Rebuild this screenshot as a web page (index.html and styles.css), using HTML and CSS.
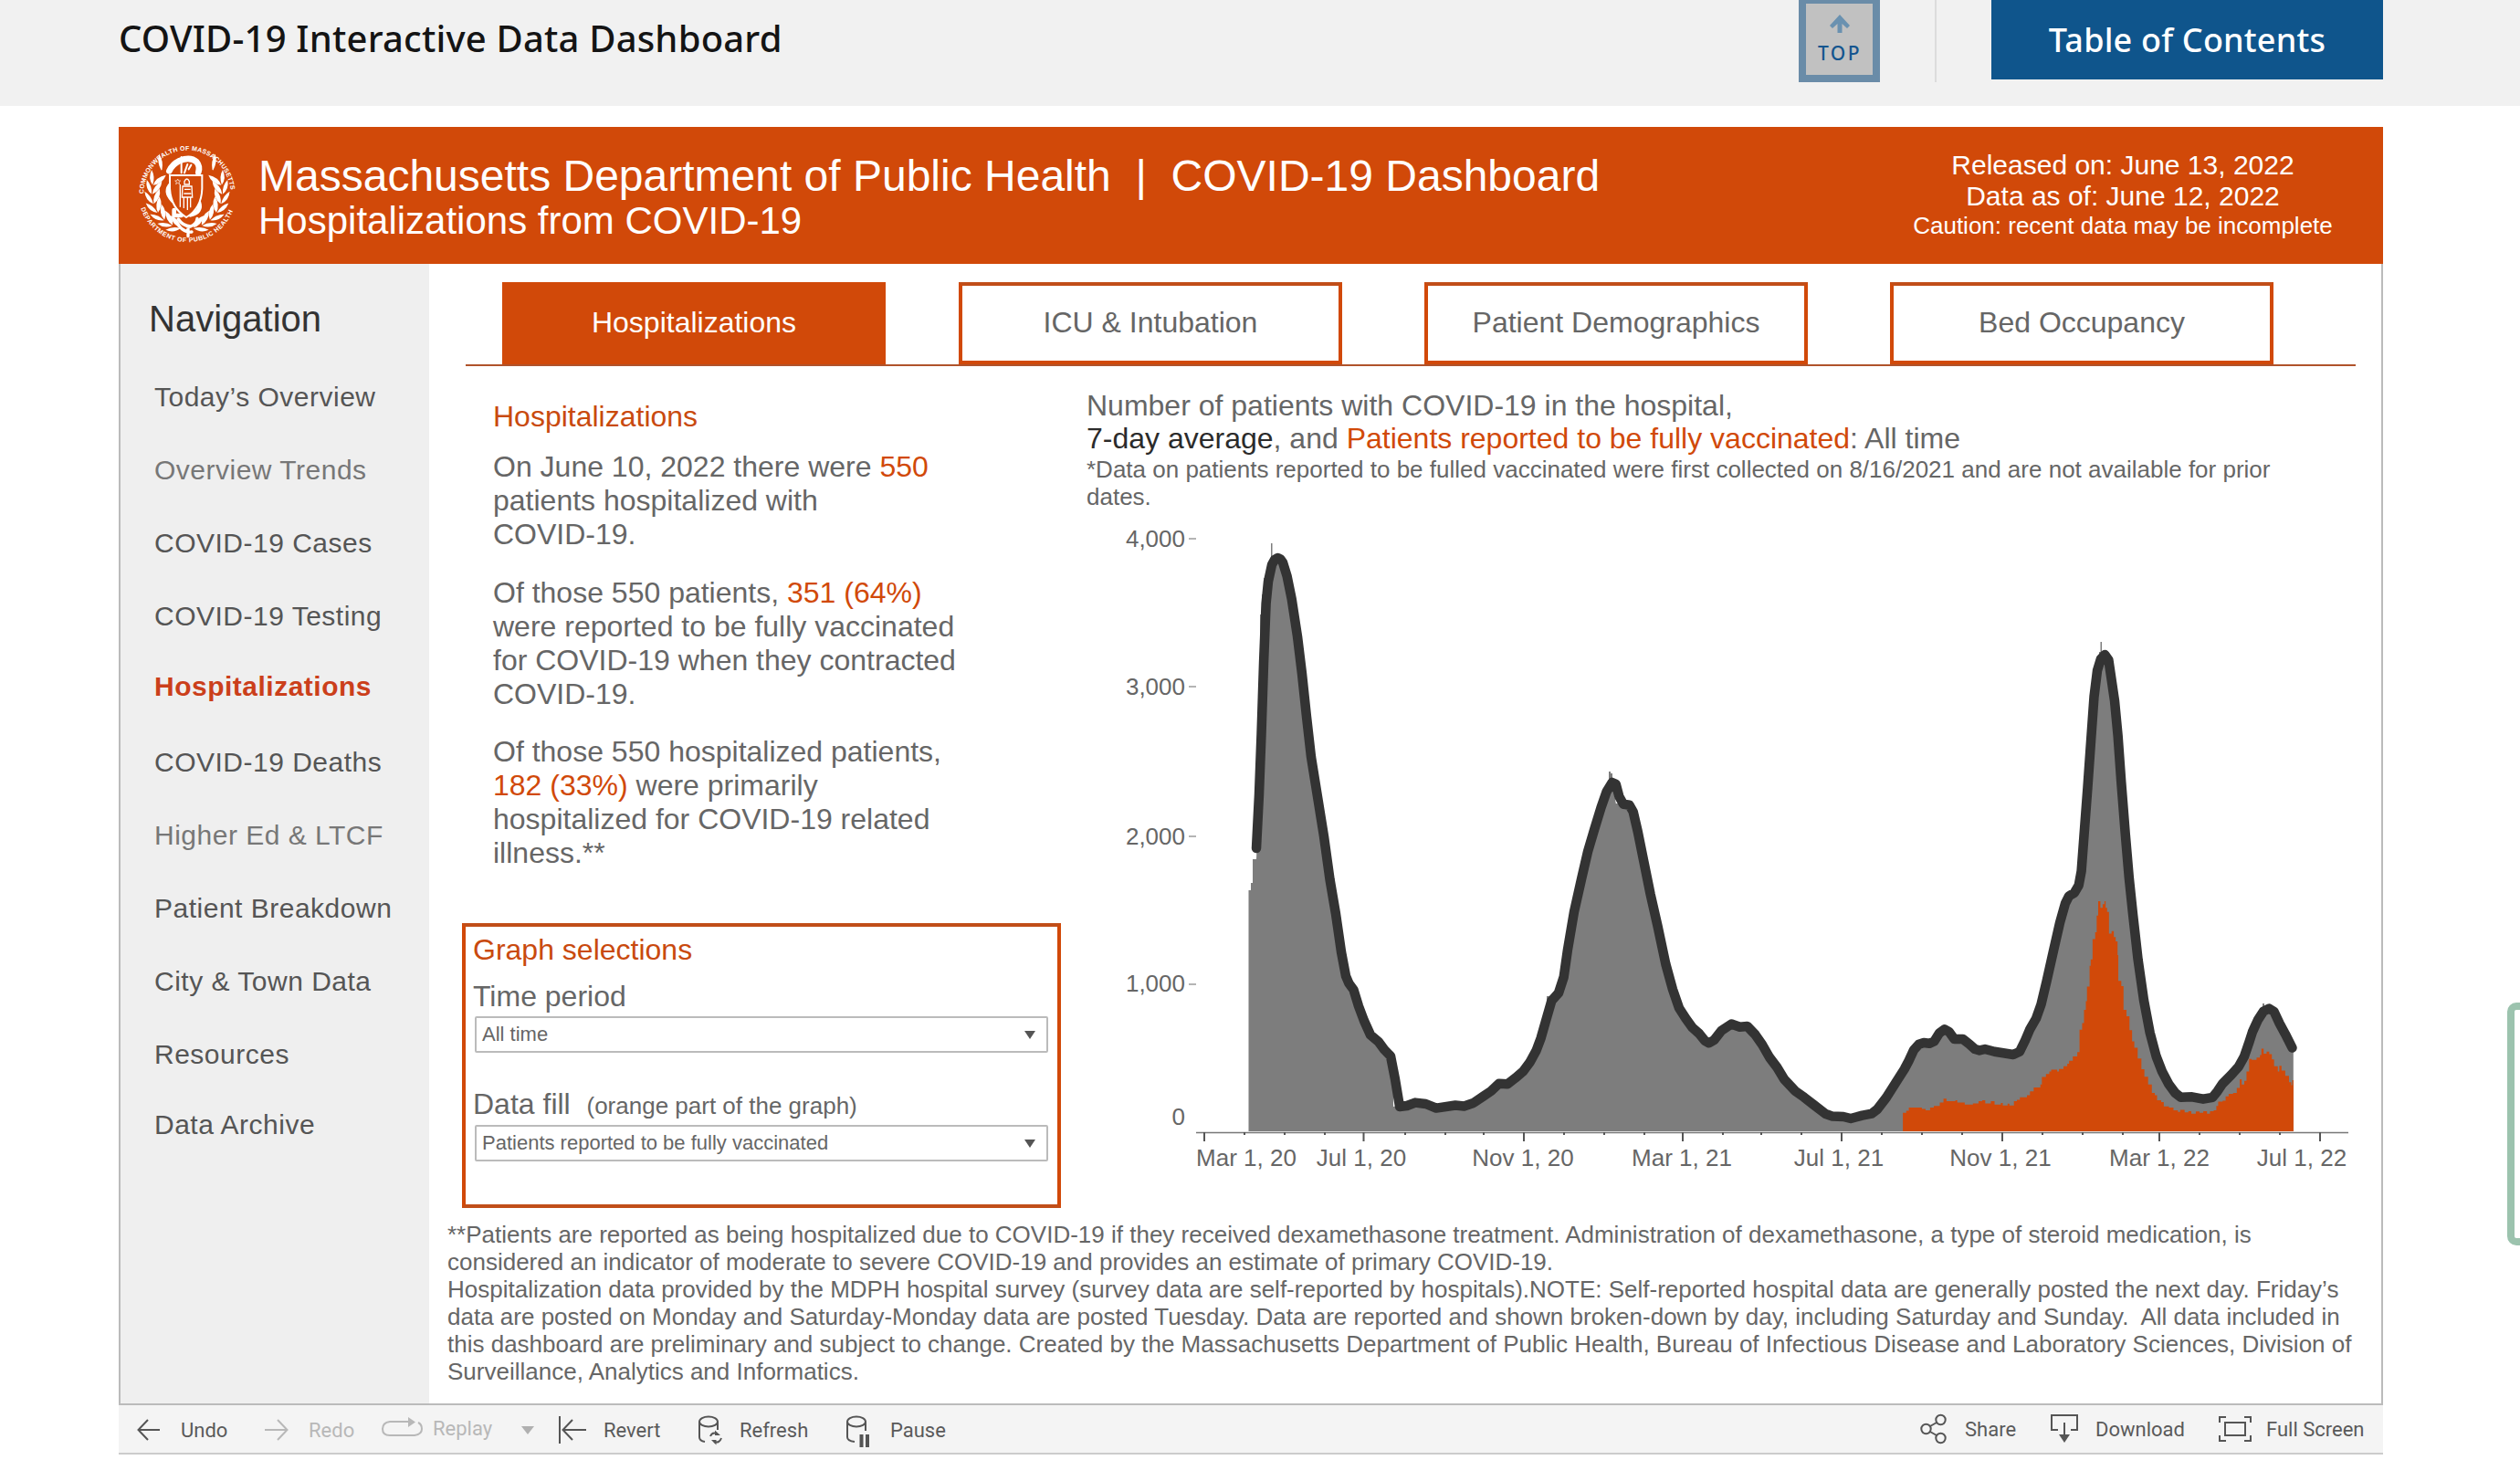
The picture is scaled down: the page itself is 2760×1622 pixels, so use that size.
FILE: index.html
```html
<!DOCTYPE html>
<html lang="en">
<head>
    <meta charset="UTF-8">
    <meta name="viewport" content="width=device-width, initial-scale=1.0">
    <title>COVID-19 Interactive Data Dashboard</title>
    <link rel="stylesheet" href="styles.css">
</head>
<body>

<div class="topbar">
    <h1>COVID-19 Interactive Data Dashboard</h1>
    <a class="top-link">
        <svg width="22" height="20" viewBox="0 0 22 20"><path d="M11 0 L22 12 L19 15 L13.5 10 V20 H8.5 V10 L3 15 L0 12 Z" fill="#6a91b0"/></svg>
        <span>TOP</span>
    </a>
    <div class="divider"></div>
    <a class="toc">Table of Contents</a>
</div>

<div class="dashboard">
    <div class="banner">
        <svg class="seal" width="130" height="130" viewBox="30 60 390 390">
            <defs>
                <path id="arcTop" d="M82 247 A143 143 0 0 1 368 247"/>
                <path id="arcBottom" d="M73 294 A160 160 0 0 0 378 294"/>
                <g id="leaf">
                    <path d="M110 266 Q86 252 87 222 Q108 238 110 266"/>
                    <path d="M112 266 Q110 238 137 219 Q139 250 112 266"/>
                </g>
                <g id="wreath">
                    <path d="M124 192 Q104 172 104 142 Q124 160 126 190" transform="rotate(14 225 245)"/>
                    <use href="#leaf" transform="rotate(24 225 245)"/>
                    <use href="#leaf" transform="rotate(9 225 245)"/>
                    <use href="#leaf" transform="rotate(-7 225 245)"/>
                    <use href="#leaf" transform="rotate(-23 225 245)"/>
                    <use href="#leaf" transform="rotate(-39 225 245)"/>
                    <use href="#leaf" transform="rotate(-55 225 245)"/>
                    <use href="#leaf" transform="rotate(-69 225 245)"/>
                </g>
            </defs>
            <g fill="#fff">
                <text class="seal-text" textLength="436"><textPath href="#arcTop" textLength="436">COMMONWEALTH OF MASSACHUSETTS</textPath></text>
                <text class="seal-text" textLength="394"><textPath href="#arcBottom" textLength="394">DEPARTMENT OF PUBLIC HEALTH</textPath></text>
                <use href="#wreath"/>
                <use href="#wreath" transform="translate(450 0) scale(-1 1)"/>
            </g>
            <!-- snake -->
            <g fill="none" stroke="#fff" stroke-linecap="round">
                <path d="M166 172 Q176 150 200 138 Q236 124 256 142 Q268 156 262 176" stroke-width="20"/>
                <path d="M206 126 V178 M226 150 L216 178 M238 152 L230 166" stroke-width="6"/>
                <path d="M174 214 Q150 238 178 268" stroke-width="16"/>
                <path d="M264 276 Q274 306 236 316 M182 300 V318 H206" stroke-width="14"/>
                <path d="M196 330 Q210 352 236 354 Q256 346 258 328 M198 352 Q216 374 240 372 M228 356 V386" stroke-width="10"/>
            </g>
            <!-- shield -->
            <path d="M168 186 H274 V230 Q272 294 222 324 Q172 294 168 230 Z" fill="#d14909" stroke="#fff" stroke-width="6"/>
            <path d="M194 198 l3 6 6 0 -5 4 2 7 -6 -4 -6 4 2 -7 -5 -4 6 0 Z" fill="none" stroke="#fff" stroke-width="2"/>
            <path d="M202 216 V290 M216 206 Q224 190 232 206 V216 H216 Z M210 222 H240 L242 258 H208 Z M214 258 V294 M226 258 V300 M236 258 V292 M216 232 H236 M214 246 H238" fill="none" stroke="#fff" stroke-width="4"/>
        </svg>
        <div class="banner-title">
            <div class="agency">Massachusetts Department of Public Health&nbsp; |&nbsp; COVID-19 Dashboard</div>
            <div class="report">Hospitalizations from COVID-19</div>
        </div>
        <div class="banner-dates">
            <div>Released on: June 13, 2022</div>
            <div>Data as of: June 12, 2022</div>
            <div class="caution">Caution: recent data may be incomplete</div>
        </div>
    </div>

    <div class="frame">
        <div class="sidebar">
            <h2>Navigation</h2>
            <ul>
                <li>Today’s Overview</li>
                <li class="dim">Overview Trends</li>
                <li>COVID-19 Cases</li>
                <li>COVID-19 Testing</li>
                <li class="active">Hospitalizations</li>
                <li>COVID-19 Deaths</li>
                <li class="dim">Higher Ed &amp; LTCF</li>
                <li>Patient Breakdown</li>
                <li>City &amp; Town Data</li>
                <li>Resources</li>
                <li class="last">Data Archive</li>
            </ul>
        </div>

        <div class="main">
            <div class="tabs">
                <div class="tab selected">Hospitalizations</div>
                <div class="tab">ICU &amp; Intubation</div>
                <div class="tab">Patient Demographics</div>
                <div class="tab">Bed Occupancy</div>
            </div>

            <div class="columns">
                <div class="left">
                    <div class="summary">
                        <h3>Hospitalizations</h3>
                        <p>On June 10, 2022 there were <b>550</b><br>patients hospitalized with<br>COVID-19.</p>
                        <p>Of those 550 patients, <b>351 (64%)</b><br>were reported to be fully vaccinated<br>for COVID-19 when they contracted<br>COVID-19.</p>
                        <p>Of those 550 hospitalized patients,<br><b>182 (33%)</b> were primarily<br>hospitalized for COVID-19 related<br>illness.**</p>
                    </div>
                    <div class="selections">
                        <h3>Graph selections</h3>
                        <div class="field-label">Time period</div>
                        <div class="select">All time<i class="caret"></i></div>
                        <div class="field-label second">Data fill&nbsp; <small>(orange part of the graph)</small></div>
                        <div class="select">Patients reported to be fully vaccinated<i class="caret"></i></div>
                    </div>
                </div>

                <div class="chart">
                    <div class="chart-title">Number of patients with COVID-19 in the hospital,<br><span class="dark">7-day average</span>, and <b>Patients reported to be fully vaccinated</b>: All time</div>
                    <div class="chart-note">*Data on patients reported to be fulled vaccinated were first collected on 8/16/2021 and are not available for prior<br>dates.</div>
                    <svg width="1400" height="740" viewBox="1190 559 1400 740">
                        <g class="y-labels">
                            <text x="1298" y="599">4,000</text>
                            <text x="1298" y="761">3,000</text>
                            <text x="1298" y="925">2,000</text>
                            <text x="1298" y="1086">1,000</text>
                            <text x="1298" y="1232">0</text>
                        </g>
                        <path d="M1302 590 h8 M1302 752 h8 M1302 916 h8 M1302 1078 h8" stroke="#b4b4b4" stroke-width="2"/>

                        <!-- daily patients -->
                        <path fill="#7d7d7d" d="M1367.5 1239 V975 H1370 V967 H1372 V941 H1376 L1379 870 L1380 800 V673 H1382 V651 H1384 V633 H1387 L1391 616 H1392 V595 H1393.5 V612 L1399.4 611 L1405 616 L1409.6 631 L1414.7 656 L1421 697 L1426 738 L1431 785 L1436 829 L1443 872.5 L1450 916 L1456.5 963 L1463 1001 L1469 1042.5 L1474 1069 L1482.5 1084 L1488 1102 L1494 1118 L1501 1133.5 L1509.6 1140.7 L1516 1149.4 L1523 1156.6 L1526 1180 V1212 L1550 1207.6 L1573 1213.6 L1603.5 1211.4 L1625 1200.4 L1641.7 1186.7 L1651 1187.3 L1668 1173.6 L1682.6 1150.5 L1693.8 1115.4 L1694 1091 H1699 L1707 1087.5 L1712.7 1070 L1724 998.6 L1739 932.8 L1753.5 884.5 L1762 862 V845 H1764 V847 H1766 V857 L1769.8 880 H1778 L1788.7 889 L1800.4 943.8 L1815.7 1015 L1832 1083.6 L1846.3 1115.4 L1871.8 1142.3 L1896.3 1121.5 L1913.7 1124 L1938 1158 L1963 1190 L1999 1219.7 L2027 1225 L2056 1215 L2085.7 1171 L2092 1150 L2101.6 1143.8 L2118.4 1140.5 L2129.8 1127.3 L2140.4 1138 L2168 1148 L2205 1155 L2218 1139.5 L2235.5 1100 L2249 1041.4 L2262 985 L2272 972 L2276.7 960 L2286.5 850 L2289 770 L2296 723 H2299 V714 H2300.5 V703 H2302 V717 H2305 L2309.4 722.8 L2316 767.6 L2323.3 857 L2331.8 961 L2341.6 1050.8 L2354.7 1131 L2368 1173.5 L2388.6 1201.8 L2423.3 1201.8 L2451.8 1168.3 L2467 1130 L2478 1108 V1099 H2480 V1107 L2485.3 1104.6 L2490.6 1107.9 L2502.9 1132.4 L2511.8 1148 V1239 Z"/>

                        <!-- fully vaccinated -->
                        <g transform="translate(1960 560) scale(.4082 .4719)">
                            <path fill="#d14909" d="M304 1439 V1396 H313 V1391 H320 V1384 H355 V1387 H365 V1390 H377 V1384 H387 V1380 H403 V1372 H413 V1363 H421 V1369 H445 V1367 H450 V1372 H470 V1377 H492 V1374 H507 V1369 H517 V1367 H525 V1374 H540 V1369 H550 V1377 H567 V1373 H572 V1379 H585 V1375 H590 V1379 H602 V1369 H610 V1366 H618 V1360 H637 V1355 H645 V1346 H655 V1337 H673 V1330 H677 V1313 H688 V1306 H697 V1300 H702 V1296 H718 V1300 H723 V1294 H735 V1288 H745 V1282 H750 V1275 H760 V1265 H772 V1255 H778 V1203 H785 V1188 H790 V1157 H795 V1137 H798 V1103 H805 V1055 H808 V1040 H813 V993 H820 V977 H824 V938 H828 V905 H834 V920 H840 V912 H845 V905 H848 V920 H852 V930 H857 V980 H864 V974 H870 V988 H875 V998 H880 V1030 H882 V1090 H890 V1102 H896 V1157 H904 V1172 H912 V1204 H919 V1230 H925 V1245 H934 V1270 H944 V1295 H952 V1312 H962 V1330 H972 V1350 H980 V1355 H986 V1367 H997 V1371 H1004 V1381 H1018 V1384 H1030 V1390 H1042 V1394 H1048 V1389 H1060 V1395 H1070 V1392 H1078 V1398 H1090 V1393 H1100 V1396 H1110 V1392 H1120 V1398 H1128 V1392 H1138 V1390 H1145 V1380 H1150 V1370 H1162 V1368 H1170 V1358 H1178 V1352 H1190 V1350 H1200 V1338 H1208 V1318 H1213 V1330 H1220 V1322 H1226 V1300 H1233 V1271 H1240 V1273 H1253 V1268 H1262 V1262 H1266 V1247 H1272 V1259 H1280 V1254 H1287 V1260 H1294 V1272 H1300 V1288 H1310 V1300 H1314 V1287 H1320 V1298 H1330 V1310 H1340 V1325 H1346 V1332 H1349 V1320 H1352 V1439 Z"/>
                        </g>

                        <!-- 7-day average -->
                        <polyline fill="none" stroke="#333" stroke-width="10.5" stroke-linecap="round" stroke-linejoin="round" points="1376,929 1379,870 1381.5,804 1384,727 1386.6,661 1389,637 1393,618.5 1396,613 1399.4,611 1402.5,612.5 1405,616 1409.6,631 1414.7,656 1421,697 1426,738 1431,785 1436,829 1443,872.5 1450,916 1456.5,963 1463,1001 1469,1042.5 1474,1069 1477.4,1077 1482.5,1084 1488,1102 1494,1118 1501,1133.5 1509.6,1140.7 1516,1149.4 1523,1156.6 1528,1182 1533,1212 1541,1211 1550,1207.6 1561.6,1209 1573,1213.6 1594,1210.5 1603.5,1211.4 1613.7,1208 1625,1200.4 1633,1195 1641.7,1186.7 1651,1187.3 1659.6,1180.7 1668,1173.6 1675.4,1163.7 1682.6,1150.5 1687.7,1136.8 1693.8,1115.4 1699.4,1096 1707,1087.5 1712.7,1070 1717,1039.8 1724,998.6 1732,963 1739,932.8 1746.3,908 1753.5,884.5 1759.6,867 1765.7,857 1769.8,858.8 1773.4,872.5 1778,880.7 1784.6,881.8 1788.7,889 1793.8,911 1800.4,943.8 1807.6,979.4 1815.7,1015 1824.4,1056 1832,1083.6 1839,1104 1846.3,1115.4 1853.5,1125.3 1861,1132 1867,1139.6 1871.8,1142.3 1877.4,1139 1885.6,1128.6 1896.3,1121.5 1905.5,1124.8 1913.7,1124 1922.3,1133 1930,1144 1938,1158 1946.3,1169 1954,1181.8 1966,1194.7 1976,1201.8 1986.5,1210 1999,1219.7 2007,1222.6 2019,1223 2027,1225 2039.6,1221.6 2050,1219.7 2056,1215 2066,1202 2076.3,1185.8 2085.7,1171 2090.6,1161.7 2096,1150 2101.6,1143.8 2107,1142 2113,1142.8 2118.4,1140.5 2124,1131.5 2129.8,1127.3 2134.7,1130 2140.4,1138 2149.8,1138 2156.7,1143.3 2163,1149 2168,1150.4 2174,1149 2184.5,1151.8 2205,1155 2212,1151.8 2218,1139.5 2223,1127.7 2230,1115.5 2235.5,1100 2241.6,1074.4 2249,1041.4 2256,1010.7 2262,989.4 2266,981.4 2272,977.7 2276.7,969.6 2279.6,954 2282.4,916.3 2286.5,862 2289.8,814.8 2293.5,763 2297,734.6 2300.8,721.9 2305.3,717 2309.4,722.8 2312.2,741.7 2316,767.6 2319.6,805.4 2323.3,857 2327.8,914 2331.8,961 2336,1001 2341.6,1050.8 2348,1095.6 2354.7,1131 2361.6,1157 2368,1173.5 2375.5,1187.7 2382.4,1197 2388.6,1201.8 2400.8,1201.3 2413,1203.7 2423.3,1201.8 2428.6,1195.2 2434.3,1186.7 2443.7,1177.3 2451.8,1168.3 2458,1157 2462.9,1142.8 2467,1130 2473,1116.9 2479.2,1107.4 2485.3,1104.6 2490.6,1107.9 2496.7,1121 2502.9,1132.4 2510.5,1147.5"/>

                        <!-- x axis -->
                        <path d="M1310 1240.5 H2572" stroke="#777" stroke-width="1.4"/>
                        <path d="M1319 1240 v10 M1493.5 1240 v10 M1669 1240 v10 M1843 1240 v10 M2017 1240 v10 M2193 1240 v10 M2365 1240 v10 M2541 1240 v10" stroke="#555" stroke-width="2"/>
                        <path d="M1363 1240 v3 M1407 1240 v3 M1451 1240 v3 M1539 1240 v3 M1583 1240 v3 M1625 1240 v3 M1713 1240 v3 M1757 1240 v3 M1801 1240 v3 M1887 1240 v3 M1929 1240 v3 M1973 1240 v3 M2061 1240 v3 M2105 1240 v3 M2149 1240 v3 M2237 1240 v3 M2281 1240 v3 M2325 1240 v3 M2409 1240 v3 M2453 1240 v3 M2497 1240 v3" stroke="#555" stroke-width="2"/>
                        <g class="x-labels">
                            <text x="1365" y="1277">Mar 1, 20</text>
                            <text x="1491" y="1277">Jul 1, 20</text>
                            <text x="1668" y="1277">Nov 1, 20</text>
                            <text x="1842" y="1277">Mar 1, 21</text>
                            <text x="2014" y="1277">Jul 1, 21</text>
                            <text x="2191" y="1277">Nov 1, 21</text>
                            <text x="2365" y="1277">Mar 1, 22</text>
                            <text x="2521" y="1277">Jul 1, 22</text>
                        </g>
                    </svg>
                </div>
            </div>

            <div class="footnote">**Patients are reported as being hospitalized due to COVID-19 if they received dexamethasone treatment. Administration of dexamethasone, a type of steroid medication, is<br>considered an indicator of moderate to severe COVID-19 and provides an estimate of primary COVID-19.<br>Hospitalization data provided by the MDPH hospital survey (survey data are self-reported by hospitals).NOTE: Self-reported hospital data are generally posted the next day. Friday’s<br>data are posted on Monday and Saturday-Monday data are posted Tuesday. Data are reported and shown broken-down by day, including Saturday and Sunday.&nbsp; All data included in<br>this dashboard are preliminary and subject to change. Created by the Massachusetts Department of Public Health, Bureau of Infectious Disease and Laboratory Sciences, Division of<br>Surveillance, Analytics and Informatics.</div>
        </div>
    </div>

    <div class="toolbar">
        <div class="tools-left">
            <div class="tool">
                <svg width="26" height="34" viewBox="0 0 26 34"><path d="M25 17 H2 M12 6 L1.5 17 L12 28"/></svg>
                <span>Undo</span>
            </div>
            <div class="tool disabled">
                <svg width="26" height="34" viewBox="0 0 26 34"><path d="M0 17 H24 M14 6 L24.5 17 L14 28"/></svg>
                <span>Redo</span>
            </div>
            <div class="tool disabled replay">
                <svg width="45" height="34" viewBox="0 0 45 34"><path d="M31 8 H9 Q1 9 1 16 Q1 23 9 23 H36 Q44 22 44 16 Q44 11 40 9"/><path d="M29 3 L37 8.5 L29 14 Z" class="solid"/></svg>
                <span>Replay</span>
            </div>
            <div class="tool disabled"><i class="caret"></i></div>
            <div class="tool">
                <svg width="30" height="34" viewBox="0 0 30 34"><path d="M1 2 V32 M30 17 H5 M15 6 L4.500 17 L15 28"/></svg>
                <span>Revert</span>
            </div>
            <div class="tool">
                <svg width="26" height="34" viewBox="0 0 26 34"><ellipse cx="11" cy="8" rx="10" ry="5.500"/><path d="M1 8 V25 Q1 29 7 30 M21 8 V17"/><path d="M13 24 Q15 19 20 21 M25 26 Q23 32 17 30"/><path d="M18 17.500 L24 23 H18 Z M19.500 33.500 L14 28 H19.500 Z" class="solid"/></svg>
                <span>Refresh</span>
            </div>
            <div class="tool">
                <svg width="26" height="34" viewBox="0 0 26 34"><ellipse cx="11" cy="8" rx="10" ry="5.500"/><path d="M1 8 V25 Q1 29 9 30 M21 8 V18"/><path d="M16.500 22 V36 M23 22 V36" class="thick"/></svg>
                <span>Pause</span>
            </div>
        </div>
        <div class="tools-right">
            <div class="tool">
                <svg width="30" height="34" viewBox="0 0 30 34"><circle cx="6.500" cy="17" r="5.200"/><circle cx="22.500" cy="7" r="5.200"/><circle cx="22.500" cy="27" r="5.200"/><path d="M11 14 L18 10 M11 20 L18 24"/></svg>
                <span>Share</span>
            </div>
            <div class="tool">
                <svg width="30" height="34" viewBox="0 0 30 34"><path d="M8 18 H1 V2 H29 V18 H22 M15 10 V26"/><path d="M9 23 H21 L15 32 Z" class="solid"/></svg>
                <span>Download</span>
            </div>
            <div class="tool">
                <svg width="36" height="34" viewBox="0 0 36 34"><path d="M1 10 V4 H8 M28 4 H35 V10 M35 24 V30 H28 M8 30 H1 V24"/><rect x="7" y="10" width="22" height="14"/></svg>
                <span>Full Screen</span>
            </div>
        </div>
    </div>
</div>

<div class="feedback"></div>

</body>
</html>
```
FILE: styles.css
```css
* {
    box-sizing: border-box;
}
body {
    font-family: "Liberation Sans", Arial, sans-serif;
    margin: 0;
    padding: 0;
    background-color: #fff;
    color: #666;
    overflow: hidden;
}
h1, h2, h3, p, ul {
    margin: 0;
    padding: 0;
    font-weight: normal;
}
b {
    font-weight: normal;
    color: #d14909;
}

/* top bar */
.topbar {
    display: flex;
    align-items: flex-start;
    height: 116px;
    padding: 0 150px 0 130px;
    background-color: #f1f1f1;
    font-family: "Noto Sans", sans-serif;
}
.topbar h1 {
    flex: 1;
    font-size: 40px;
    line-height: 54px;
    font-weight: 500;
    letter-spacing: 0.2px;
    color: #141414;
    padding-top: 15px;
}
.top-link {
    display: flex;
    flex-direction: column;
    align-items: center;
    width: 89px;
    height: 90px;
    padding-top: 12px;
    border: 8px solid #6a8ca8;
    border-top-width: 4px;
    background-color: #c1c1c1;
}
.top-link span {
    font-size: 21px;
    line-height: 28px;
    font-weight: 500;
    letter-spacing: 2.5px;
    color: #14558f;
    margin-top: 8px;
    margin-right: -1px;
}
.divider {
    width: 2px;
    height: 90px;
    margin: 0 60px;
    background-color: #dcdcdc;
}
.toc {
    width: 429px;
    height: 87px;
    font-size: 36px;
    line-height: 87px;
    font-weight: 500;
    letter-spacing: 0.2px;
    text-align: center;
    color: #fff;
    background-color: #0f558c;
}

/* dashboard */
.dashboard {
    width: 2480px;
    margin: 23px 0 0 130px;
}
.banner {
    display: flex;
    height: 150px;
    padding-left: 10px;
    background-color: #d14909;
    color: #fff;
}
.seal {
    margin-top: 11px;
}
.seal-text {
    font-size: 21px;
    font-weight: bold;
}
.banner-title {
    flex: 1;
    padding: 28px 0 0 13px;
    white-space: nowrap;
}
.agency {
    font-size: 48px;
    line-height: 52px;
}
.report {
    font-size: 42px;
    line-height: 46px;
}
.banner-dates {
    width: 460px;
    margin-right: 55px;
    padding-top: 25px;
    text-align: center;
    font-size: 30px;
    line-height: 34px;
    white-space: nowrap;
}
.banner-dates .caution {
    font-size: 26px;
    line-height: 30px;
}
.frame {
    display: flex;
    height: 1248px;
    border-left: 2px solid #bbb;
    border-right: 2px solid #bbb;
}

/* navigation */
.sidebar {
    width: 338px;
    padding: 38px 0 0 31px;
    background-color: #efefef;
}
.sidebar h2 {
    font-size: 40px;
    line-height: 44px;
    color: #333;
}
.sidebar ul {
    list-style: none;
    margin: 24px 0 0 6px;
}
.sidebar li {
    font-size: 30px;
    line-height: 80px;
    letter-spacing: 0.5px;
    color: #555;
}
.sidebar li.dim {
    color: #777;
}
.sidebar li.active {
    font-weight: bold;
    color: #cb3f1b;
    margin: -3px 0 3px;
}
.sidebar li.last {
    margin-top: -3px;
}

/* tabs */
.main {
    flex: 1;
    padding-top: 20px;
}
.tabs {
    display: flex;
    gap: 90px;
    width: 2070px;
    height: 92px;
    margin-left: 40px;
    padding-left: 40px;
    border-bottom: 2px solid #b0532b;
}
.tab {
    width: 420px;
    height: 90px;
    border: 4px solid #d14909;
    border-top-color: #c14e19;
    font-size: 32px;
    line-height: 80px;
    text-align: center;
}
.tab.selected {
    margin-right: -10px;
    background-color: #d14909;
    border-color: #d14909;
    color: #fff;
}

/* left column */
.columns {
    display: flex;
    height: 922px;
    padding-left: 36px;
}
.left {
    width: 684px;
}
.summary {
    height: 610px;
    padding: 37px 0 0 34px;
    font-size: 32px;
    line-height: 37px;
    white-space: nowrap;
}
.summary h3, .selections h3 {
    font-size: 32px;
    line-height: 37px;
    color: #c94a0e;
}
.summary h3 {
    margin-bottom: 18px;
}
.summary p {
    margin-bottom: 26.5px;
}
.selections {
    width: 656px;
    height: 312px;
    padding: 7px 10px 0;
    border: 4px solid #d14909;
    border-top-color: #c14e19;
    border-bottom-color: #c14e19;
}
.selections h3 {
    margin-left: -2px;
}
.field-label {
    margin: 14px 0 3px -2px;
    font-size: 32px;
    line-height: 37px;
}
.field-label.second {
    margin: 38px 0 2px -2px;
}
.field-label small {
    font-size: 26px;
}
.select {
    display: flex;
    align-items: center;
    justify-content: space-between;
    width: 628px;
    height: 40px;
    padding: 0 12px 0 6px;
    border: 2px solid #bbb;
    border-radius: 2px;
    font-size: 22px;
}
.caret {
    border: 6px solid transparent;
    border-top: 9px solid #555;
    border-bottom: none;
}

/* chart */
.chart {
    padding-top: 25px;
    white-space: nowrap;
}
.chart-title {
    font-size: 32px;
    line-height: 36px;
}
.chart-title .dark {
    color: #2b2b2b;
}
.chart-note {
    padding-top: 1px;
    font-size: 26px;
    line-height: 30px;
}
.chart svg {
    display: block;
}
.y-labels text, .x-labels text {
    font-size: 26px;
    fill: #666;
    text-anchor: end;
}
.x-labels text {
    text-anchor: middle;
}
.footnote {
    padding: 14px 0 0 20px;
    font-size: 26px;
    line-height: 30px;
    white-space: nowrap;
}

/* toolbar */
.toolbar {
    display: flex;
    justify-content: space-between;
    height: 56px;
    padding-left: 20px;
    border-top: 2px solid #bbb;
    border-bottom: 2px solid #ccc;
    background-color: #f4f4f4;
    font-family: Roboto, sans-serif;
    font-size: 22px;
}
.tools-left {
    display: grid;
    grid-template-columns: 140px 128px 153px 41px 153px 162px 120px;
}
.tools-right {
    display: grid;
    grid-template-columns: 143px 184px 180px;
}
.tool {
    display: flex;
    align-items: center;
    color: #5a5a5a;
    padding-top: 2px;
    white-space: nowrap;
}
.tool svg {
    fill: none;
    stroke: #555;
    stroke-width: 2;
    overflow: visible;
}
.tool svg .solid {
    fill: #555;
    stroke: none;
}
.tool svg .thick {
    stroke-width: 4;
}
.tool span {
    margin-left: 19px;
}
.tools-left .tool:nth-child(1) span,
.tools-left .tool:nth-child(2) span,
.tools-left .tool:nth-child(7) span {
    margin-left: 22px;
}
.tool.replay span {
    margin-left: 11px;
    margin-top: -3px;
}
.tools-right .tool {
    padding-top: 0;
}
.tools-right .tool:nth-child(3) span {
    margin-left: 16px;
}
.tool.disabled {
    color: #b8b8b8;
}
.tool.disabled svg {
    stroke: #b8b8b8;
}
.tool.disabled svg .solid {
    fill: #b8b8b8;
}
.tool.disabled .caret {
    border-width: 9px 7px 0;
    border-top-color: #b0b0b0;
}

/* feedback panel, mostly off the right edge */
.feedback {
    position: absolute;
    left: 2746px;
    top: 1098px;
    width: 60px;
    height: 266px;
    border: 8px solid #9cc3ae;
    border-radius: 10px;
}
```
